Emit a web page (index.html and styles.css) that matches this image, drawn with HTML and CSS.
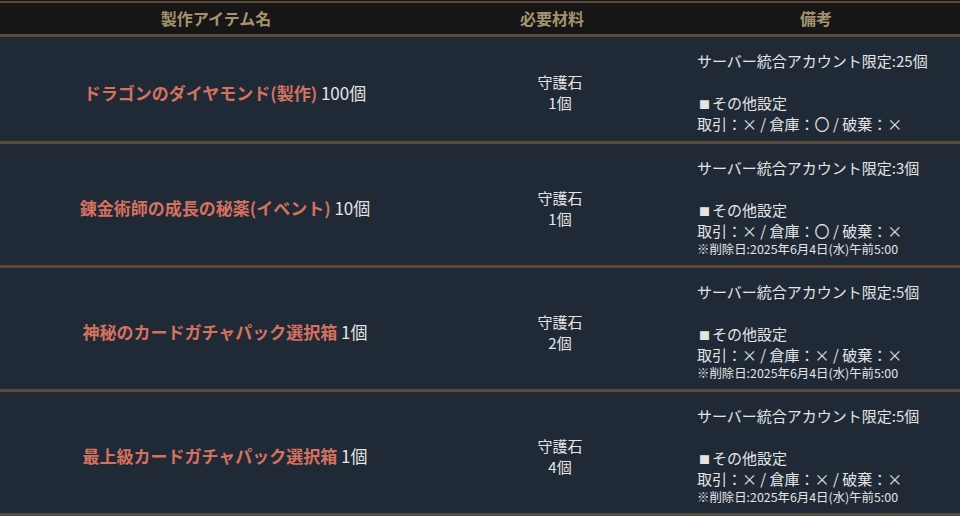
FILE: index.html
```html
<!DOCTYPE html>
<html lang="ja">
<head>
<meta charset="utf-8">
<link rel="stylesheet" href="styles.css">
</head>
<body>
<div class="table">
  <div class="row head">
    <div class="cell">製作アイテム名</div>
    <div class="cell">必要材料</div>
    <div class="cell">備考</div>
  </div>
  <div class="row">
    <div class="cell name"><span class="item">ドラゴンのダイヤモンド(製作)</span> 100個</div>
    <div class="cell mat">守護石<br>1個</div>
    <div class="cell note">サーバー統合アカウント限定:25個<br><br><span class="sq">■</span>その他設定<br>取引：× / 倉庫：〇 / 破棄：×</div>
  </div>
  <div class="row">
    <div class="cell name"><span class="item">錬金術師の成長の秘薬(イベント)</span> 10個</div>
    <div class="cell mat">守護石<br>1個</div>
    <div class="cell note">サーバー統合アカウント限定:3個<br><br><span class="sq">■</span>その他設定<br>取引：× / 倉庫：〇 / 破棄：×<span class="small">※削除日:2025年6月4日(水)午前5:00</span></div>
  </div>
  <div class="row">
    <div class="cell name"><span class="item">神秘のカードガチャパック選択箱</span> 1個</div>
    <div class="cell mat">守護石<br>2個</div>
    <div class="cell note">サーバー統合アカウント限定:5個<br><br><span class="sq">■</span>その他設定<br>取引：× / 倉庫：× / 破棄：×<span class="small">※削除日:2025年6月4日(水)午前5:00</span></div>
  </div>
  <div class="row">
    <div class="cell name"><span class="item">最上級カードガチャパック選択箱</span> 1個</div>
    <div class="cell mat">守護石<br>4個</div>
    <div class="cell note">サーバー統合アカウント限定:5個<br><br><span class="sq">■</span>その他設定<br>取引：× / 倉庫：× / 破棄：×<span class="small">※削除日:2025年6月4日(水)午前5:00</span></div>
  </div>
</div>
</body>
</html>
```
FILE: styles.css
```css
html, body {
  margin: 0;
  padding: 0;
  background: #202a37;
}
body {
  font-family: "Noto Sans CJK JP", "Noto Sans", sans-serif;
  color: #e4e4e4;
  width: 960px;
  height: 516px;
  overflow: hidden;
}
.table {
  border-top: 1px solid #171516;
}
.row {
  display: grid;
  grid-template-columns: 432px 240px 1fr;
  border-bottom: 3px solid #5b4a37;
  align-items: center;
}
.head {
  background: #171516;
  border-top: 2px solid #5b4a37;
  height: 31px;
  font-size: 16px;
  font-weight: bold;
  color: #a3946f;
  text-align: center;
  line-height: 31px;
}
.row:not(.head) {
  padding: 13px 0 7px;
  font-size: 15px;
  line-height: 21px;
}
.name {
  padding-left: 18px;
  text-align: center;
  font-size: 17px;
  color: #e4e4e4;
}
.item {
  color: #d4715f;
  font-weight: bold;
}
.mat {
  padding-left: 16px;
  text-align: center;
}
.note {
  padding-left: 25px;
  text-align: left;
}
.sq {
  display: inline-block;
  width: 15px;
  font-size: 11px;
  line-height: 1;
  text-align: center;
}
.small {
  display: block;
  font-size: 12.4px;
  line-height: 17px;
}
```
